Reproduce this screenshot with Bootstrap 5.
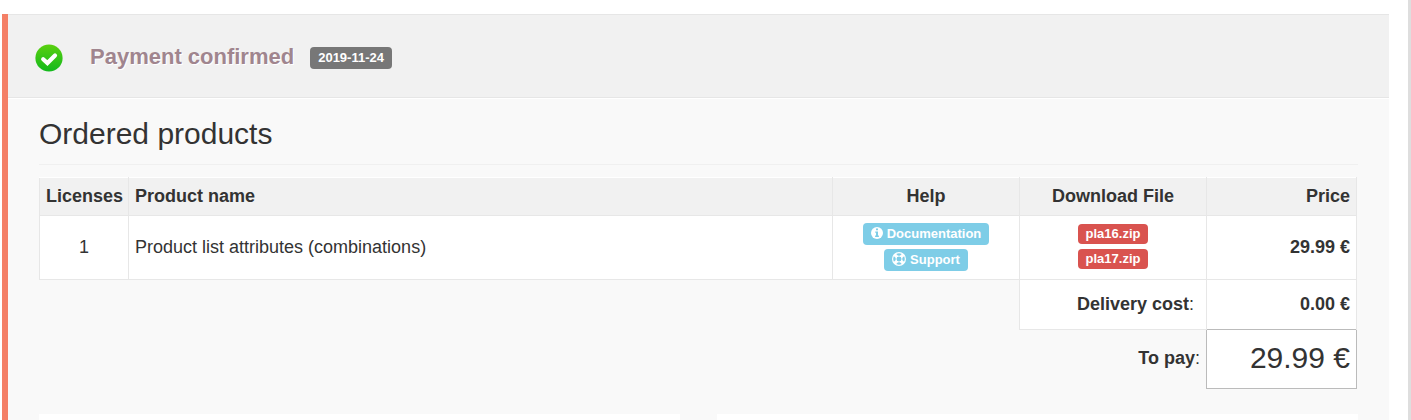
<!DOCTYPE html>
<html lang="en">
<head>
<meta charset="utf-8">
<meta name="viewport" content="width=device-width, initial-scale=1">
<title>Payment confirmed</title>
<link href="https://cdn.jsdelivr.net/npm/bootstrap@5.3.0/dist/css/bootstrap.min.css" rel="stylesheet">
<style>
body { font-family: "Liberation Sans", Arial, sans-serif; font-size: 18px; line-height: 24px; color: #333; background: #fff; border-right: 3px solid #dedede; }
.order { margin: 14px 19px 0 2px; border-left: 6px solid #f47f66; background: #f9f9f9; }
.order-head { height: 84px; padding: 4px 27px 0; background: #f1f1f1; border-top: 1px solid #e6e6e6; border-bottom: 1px solid #e6e6e6; box-shadow: 0 1px 0 #fff; }
.order-head h1 { font-size: 22px; line-height: 28px; font-weight: 700; color: #a0858e; text-shadow: 1px 1px 0 #fff; margin: 0 16px 2px 27px; }
.tag { font-size: 13px; line-height: 13px; font-weight: 700; color: #fff; padding: 4px 8px 5px; border-radius: 4px; text-decoration: none; white-space: nowrap; }
.tag-date { background: #777; }
.tag-help { height: 22px; background: #7ecde7; }
.tag-file { background: #d9534f; padding: 3px 8px 4px; }
.order-body { padding: 16px 31px 0; }
.order-body h2 { font-size: 30px; line-height: 40px; margin: 0 0 12px; padding-bottom: 10px; border-bottom: 1px solid #f0f0f0; color: #333; font-weight: 400; }
.table-wrap { padding-right: 1px; }
.products { table-layout: fixed; width: 100%; border-collapse: collapse; }
.products .w-lic { width: 89px; }
.products .w-mid { width: 187px; }
.products .w-price { width: 150px; }
.products th, .products td { padding: 0 6px 2px; vertical-align: middle; }
.products .cell { border: 1px solid #e7e7e7; background: #fff; }
.products thead .cell { background: #f1f1f1; border-top-color: #fff; height: 38px; white-space: nowrap; }
.products .item { height: 64px; }
.products .delivery { height: 50px; }
.products .delivery .label { padding-right: 12px; }
.products .delivery .amount { border-bottom: 0; }
.products .total { height: 59px; }
.products .total .amount { background: #fff; border: 1px solid #bbb; font-size: 30px; }
.files { gap: 5px; }
.box { background: #fff; }
.boxes { gap: 37px; margin-top: 25px; }
</style>
</head>
<body class="d-flex flex-column min-vh-100">
<main class="order d-flex flex-column flex-grow-1">
  <header class="order-head d-flex align-items-center">
    <svg width="28" height="28" viewBox="0 0 28 28" role="img" aria-label="Confirmed">
      <defs><linearGradient id="green" x1="0" y1="0" x2="0" y2="1"><stop offset="0" stop-color="#5bd00f"/><stop offset="1" stop-color="#12b91d"/></linearGradient></defs>
      <circle cx="14" cy="14" r="13.6" fill="url(#green)"/>
      <path d="M8.2 15.2l4.2 3.8 7.6-7.6" fill="none" stroke="#fff" stroke-width="4.2" stroke-linecap="round" stroke-linejoin="miter"/>
    </svg>
    <h1>Payment confirmed</h1>
    <span class="tag tag-date">2019-11-24</span>
  </header>
  <section class="order-body d-flex flex-column flex-grow-1">
    <h2>Ordered products</h2>
    <div class="table-wrap">
    <table class="products">
      <colgroup><col class="w-lic"><col><col class="w-mid"><col class="w-mid"><col class="w-price"></colgroup>
      <thead>
        <tr><th class="cell text-center" scope="col">Licenses</th><th class="cell" scope="col">Product name</th><th class="cell text-center" scope="col">Help</th><th class="cell text-center" scope="col">Download File</th><th class="cell text-end" scope="col">Price</th></tr>
      </thead>
      <tbody>
        <tr class="item">
          <td class="cell text-center">1</td>
          <td class="cell">Product list attributes (combinations)</td>
          <td class="cell">
            <div class="d-flex flex-column align-items-center gap-1">
              <a href="#" class="tag tag-help d-flex align-items-center">
                <svg class="me-1" width="12" height="12" viewBox="0 0 12 12" aria-hidden="true"><circle cx="6" cy="6" r="6" fill="#fff"/><path d="M5 1.6h2v1.7H5zM4.2 4.4H7v4.2h.9V10H4.1V8.6H5V5.8h-.8z" fill="#7ecde7"/></svg>Documentation</a>
              <a href="#" class="tag tag-help d-flex align-items-center">
                <svg class="me-1" width="14" height="14" viewBox="0 0 14 14" aria-hidden="true"><circle cx="7" cy="7" r="6.4" fill="none" stroke="#fff" stroke-width="1.2"/><circle cx="7" cy="7" r="3" fill="none" stroke="#fff"/><path d="M2.6 2.6l2.3 2.3M11.4 2.6L9.1 4.9M2.6 11.4l2.3-2.3M11.4 11.4L9.1 9.1" stroke="#fff" stroke-width="3.2"/></svg>Support</a>
            </div>
          </td>
          <td class="cell">
            <div class="files d-flex flex-column align-items-center">
              <a href="#" class="tag tag-file">pla16.zip</a>
              <a href="#" class="tag tag-file">pla17.zip</a>
            </div>
          </td>
          <td class="cell text-end fw-bold">29.99 €</td>
        </tr>
        <tr class="delivery"><td colspan="3"></td><td class="cell label text-end"><strong>Delivery cost</strong>:</td><td class="cell amount text-end fw-bold">0.00 €</td></tr>
        <tr class="total"><td colspan="4" class="text-end"><strong>To pay</strong>:</td><td class="amount text-end">29.99 €</td></tr>
      </tbody>
    </table>
    </div>
    <div class="boxes d-flex flex-grow-1"><div class="box flex-fill"></div><div class="box flex-fill"></div></div>
  </section>
</main>
<script src="https://cdn.jsdelivr.net/npm/bootstrap@5.3.0/dist/js/bootstrap.bundle.min.js"></script>
</body>
</html>
